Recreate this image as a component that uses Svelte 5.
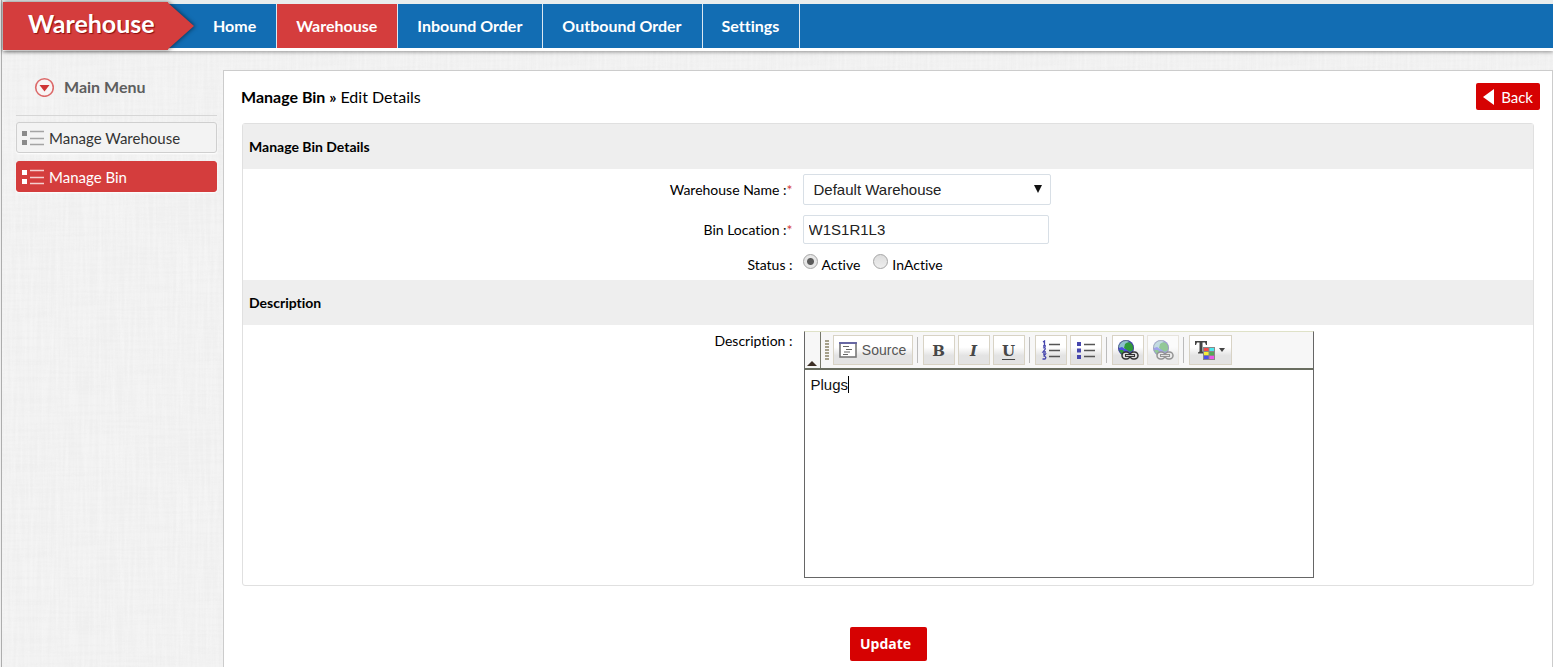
<script>
  const nav = ['Home', 'Warehouse', 'Inbound Order', 'Outbound Order', 'Settings'];
  const menu = ['Manage Warehouse', 'Manage Bin'];
  let activeNav = $state('Warehouse');
  let activeMenu = $state('Manage Bin');
  let warehouse = $state('Default Warehouse');
  let bin = $state('W1S1R1L3');
  let status = $state('Active');
  let description = $state('Plugs');
  let editing = $state(false);
</script>

{#snippet globe()}
  <circle cx="9" cy="8" r="8" fill="#4a4fe0" />
  <path d="M1 6Q4 0 10 0L12 2 9 4 10 6 8 9 5 7 2 8Z" fill="#8fc0cf" />
  <path d="M8 4Q11 1 14 3L16 6 16 10 13 12 10 10 7 8ZM2 10L6 10 8 13 5 15Z" fill="#2f9a3a" />
  <circle cx="9" cy="8" r="7.500" fill="none" stroke="#445" stroke-width="1" opacity=".6" />
  <rect x="5" y="12" width="8" height="7" rx="3.500" fill="#ddd" stroke="#333" stroke-width="1.500" />
  <rect x="13" y="12" width="8" height="7" rx="3.500" fill="#ddd" stroke="#333" stroke-width="1.500" />
  <path d="M8 15.500H18" stroke="#333" stroke-width="3" />
  <path d="M9 15.500H17" stroke="#ccc" stroke-width="1" />
{/snippet}

<div class="page">
  <header>
    <div class="brand">
      <svg viewBox="0 0 191 48" width="191" height="48" aria-hidden="true">
        <path d="M164 0L191 24 164 48Z" fill="#d43d3d" />
        <path d="M0 0H165V48H0Z" fill="#d43d3d" />
      </svg>
      <span>Warehouse</span>
    </div>
    <nav>
      {#each nav as item}
        <a href="#{item}" class:on={activeNav === item} onclick={() => (activeNav = item)}>{item}</a>
      {/each}
    </nav>
  </header>

  <div class="body">
    <aside>
      <h2>
        <svg width="20" height="20" viewBox="0 0 20 20" aria-hidden="true">
          <circle cx="10.500" cy="10.500" r="8.800" fill="#f8f4f4" stroke="#dc6a6a" stroke-width="1.600" />
          <path d="M5.500 8H15.500L10.500 14.500Z" fill="#cf3535" />
        </svg>
        Main Menu
      </h2>
      <ul>
        {#each menu as item}
          <li>
            <a href="#{item}" class:on={activeMenu === item} onclick={() => (activeMenu = item)}>
              <svg width="22" height="16" viewBox="0 0 22 16" aria-hidden="true">
                <path d="M0 1H5V6H0ZM0 10H5V15H0Z" fill="currentColor" />
                <path d="M8 1.500H22M8 8.500H22M8 14.500H22" stroke="currentColor" stroke-width="1.400" opacity=".75" />
              </svg>
              {item}
            </a>
          </li>
        {/each}
      </ul>
    </aside>

    <main>
      <div class="title">
        <h1>Manage Bin » <small>Edit Details</small></h1>
        <a class="back" href="#back">
          <svg width="11" height="16" viewBox="0 0 11 16" aria-hidden="true"><path d="M11 0V16L0 8Z" fill="#fff" /></svg>
          Back
        </a>
      </div>

      <form onsubmit={(e) => e.preventDefault()}>
        <div class="panel">
          <h3>Manage Bin Details</h3>
          <div class="row wh">
            <label for="wh">Warehouse Name :<i>*</i></label>
            <div class="select">
              <select id="wh" bind:value={warehouse}><option>Default Warehouse</option></select>
              <svg width="8" height="8" viewBox="0 0 8 8" aria-hidden="true"><path d="M0 0H8L4 8Z" fill="#111" /></svg>
            </div>
          </div>
          <div class="row loc">
            <label for="loc">Bin Location :<i>*</i></label>
            <input id="loc" type="text" bind:value={bin} />
          </div>
          <div class="row status">
            <span class="name" id="st">Status :</span>
            <div class="radios" role="radiogroup" aria-labelledby="st">
              <label><input type="radio" name="status" value="Active" bind:group={status} />Active</label>
              <label><input type="radio" name="status" value="InActive" bind:group={status} />InActive</label>
            </div>
          </div>
          <h3>Description</h3>
          <div class="row desc">
            <label for="desc">Description :</label>
            <div class="editor">
              <div class="toolbar">
                <button type="button" class="collapse" aria-label="Collapse toolbar">
                  <svg width="10" height="5" viewBox="0 0 10 5"><path d="M0 5L5 0 10 5Z" fill="#3d2f26" /></svg>
                </button>
                <span class="grip"></span>
                <button type="button" class="tool source">
                  <svg width="18" height="16" viewBox="0 0 18 16" aria-hidden="true">
                    <rect x="1" y="1" width="16" height="14" fill="#fff" stroke="#777" stroke-width="1.600" />
                    <path d="M0 1H18" stroke="#5d5da8" stroke-width="1.600" />
                    <path d="M4 4.500H10M7 7.500H13M5 10H11M4 12.500H9" stroke="#666" stroke-width="1.200" />
                  </svg>
                  Source
                </button>
                <span class="sep"></span>
                <button type="button" class="tool letter"><b>B</b></button>
                <button type="button" class="tool letter"><em>I</em></button>
                <button type="button" class="tool letter"><u>U</u></button>
                <span class="sep"></span>
                <button type="button" class="tool" aria-label="Numbered list">
                  <svg width="20" height="20" viewBox="0 0 20 20">
                    <path d="M8 4.500H19M8 10.500H19M8 16.500H19" stroke="#555" stroke-width="1.400" />
                    <path d="M2 2L3.500 1V6M2 6H5M2 8Q5 7 4 9.500L2 12H5M2 14H4.500L3 16Q6 17 4 19H1.500" fill="none" stroke="#4646ad" stroke-width="1.300" />
                  </svg>
                </button>
                <button type="button" class="tool" aria-label="Bulleted list">
                  <svg width="20" height="20" viewBox="0 0 20 20">
                    <path d="M8 4.500H19M8 10.500H19M8 16.500H19" stroke="#555" stroke-width="1.400" />
                    <path d="M1 2H5V6H1ZM1 8.500H5V12.500H1ZM1 15H5V19H1Z" fill="#4646ad" />
                  </svg>
                </button>
                <span class="sep"></span>
                <button type="button" class="tool" aria-label="Link">
                  <svg width="22" height="20" viewBox="0 0 22 20">{@render globe()}</svg>
                </button>
                <button type="button" class="tool" aria-label="Unlink" disabled>
                  <svg width="22" height="20" viewBox="0 0 22 20">{@render globe()}</svg>
                </button>
                <span class="sep"></span>
                <button type="button" class="tool color" aria-label="Text color">
                  <svg width="32" height="20" viewBox="0 0 32 20">
                    <path d="M1 1H13V5H12L11 2.500H8.500V11.500L10.500 12.500V13.500H4V12.500L5.500 11.500V2.500H3L2 5H1Z" fill="#444" />
                    <rect x="9" y="7" width="12" height="13" fill="#888" />
                    <path d="M10 8H14.500V11H10Z" fill="#f54848" />
                    <path d="M15.500 8H20V11H15.500Z" fill="#4de8ee" />
                    <path d="M10 12H14.500V15H10Z" fill="#f5ee38" />
                    <path d="M15.500 12H20V15H15.500Z" fill="#56a854" />
                    <path d="M10 16H14.500V19H10Z" fill="#4b4bf0" />
                    <path d="M15.500 16H20V19H15.500Z" fill="#ee55e8" />
                    <path d="M25 8H31L28 12Z" fill="#444" />
                  </svg>
                </button>
              </div>
              <div class="text">
                <textarea id="desc" bind:value={description} onfocus={() => (editing = true)}></textarea>
                {#if !editing}<span class="caret"></span>{/if}
              </div>
            </div>
          </div>
        </div>
        <button class="update">Update</button>
      </form>
    </main>
  </div>
</div>

<style>
  :global(body) { background: #efefef; }
  * { box-sizing: border-box; margin: 0; }
  a { text-decoration: none; }
  .page {
    min-height: 100vh;
    display: flex;
    flex-direction: column;
    margin-left: 1px;
    border-left: 1px solid #adadad;
    padding-left: 1px;
    font-family: Lato, "Open Sans", sans-serif;
    font-size: 14px;
    font-variant-ligatures: none;
    color: #000;
    background-color: #f1f1f1;
    background-image:
      url("data:image/svg+xml,%3Csvg xmlns='http://www.w3.org/2000/svg' width='240' height='240'%3E%3Cfilter id='h' x='0' y='0' width='1' height='1'%3E%3CfeTurbulence type='fractalNoise' baseFrequency='.015 .35' numOctaves='2' stitchTiles='stitch'/%3E%3CfeColorMatrix values='0 0 0 0 .5 0 0 0 0 .5 0 0 0 0 .5 .12 0 0 0 -.04'/%3E%3C/filter%3E%3Cfilter id='v' x='0' y='0' width='1' height='1'%3E%3CfeTurbulence type='fractalNoise' baseFrequency='.35 .015' numOctaves='2' stitchTiles='stitch'/%3E%3CfeColorMatrix values='0 0 0 0 1 0 0 0 0 1 0 0 0 0 1 .6 0 0 0 -.2'/%3E%3C/filter%3E%3Crect width='240' height='240' filter='url(%23h)'/%3E%3Crect width='240' height='240' filter='url(%23v)'/%3E%3C/svg%3E");
  }
  header {
    display: flex;
    align-items: center;
    height: 51px;
    padding-top: 2px;
    border-bottom: 1px solid #fff;
    box-shadow: 0 1px 4px #0006;
    background: linear-gradient(#e9eded 0 4px, #126db3 4px 48px, #fff 48px);
  }
  .brand {
    position: relative;
    flex: none;
    width: 191px;
    height: 48px;
    font-size: 25px;
    font-weight: 700;
    line-height: 42px;
    color: #fff;
    text-shadow: 1px 1px 1px #8a1010;
  }
  .brand svg { position: absolute; inset: 0; filter: drop-shadow(1px 0 2px #0008); }
  .brand span { position: relative; padding-left: 25px; }
  nav { display: flex; height: 44px; }
  nav a {
    padding: 0 20px 0 19px;
    border-right: 1px solid #dce8f2;
    font-size: 16px;
    font-weight: 700;
    line-height: 44px;
    color: #fff;
    white-space: nowrap;
  }
  nav a.on { background: #d43d3d; }
  .body { flex: 1; display: flex; align-items: stretch; padding-top: 19px; }
  aside { flex: none; width: 220px; padding: 0 6px 0 13px; }
  h2 {
    display: flex;
    align-items: center;
    gap: 10px;
    height: 46px;
    padding: 0 0 12px 18px;
    border-bottom: 1px solid #d6d6d6;
    font-size: 16px;
    color: #5e5e5e;
  }
  ul { list-style: none; padding: 6px 0 0; display: grid; gap: 8px; }
  li a {
    display: flex;
    align-items: center;
    gap: 5px;
    height: 31px;
    padding-left: 5px;
    border: 1px solid #cfcfcf;
    border-radius: 3px;
    background: #f3f3f3;
    font-size: 15px;
    color: #333;
    box-shadow: 0 1px 2px #fff;
  }
  li a svg { color: #8a8a8a; }
  li a.on { background: #d43d3d; border-color: #d43d3d; color: #fff; }
  li a.on svg { color: #fff; }
  main { flex: 1; min-width: 0; padding: 12px 18px 6px; border: 1px solid #ccc; border-bottom: 0; background: #fff; }
  .title { display: flex; justify-content: space-between; height: 40px; margin: 0 -6px 0 -1px; }
  h1 { font-size: 16px; line-height: 27px; font-weight: 700; }
  h1 small { font-size: 16px; font-weight: 400; }
  .back {
    display: flex;
    align-items: center;
    gap: 7px;
    height: 27px;
    padding: 0 7px;
    border-radius: 2px;
    background: #d60202;
    color: #fff;
    font-size: 15px;
  }
  .panel { border: 1px solid #e0e0e0; border-radius: 3px; }
  h3 { padding-left: 6px; line-height: 45px; font-size: 14px; background: #eee; }
  .row { display: grid; grid-template-columns: 42.6% 1fr; column-gap: 10px; align-items: center; }
  .row > label, .name { text-align: right; line-height: 20px; }
  i { font-style: normal; color: #d43d3d; }
  .wh { height: 41px; }
  .loc { height: 39px; }
  .status { height: 31px; }
  .select { position: relative; width: 248px; }
  .select svg { position: absolute; right: 9px; top: 11px; pointer-events: none; }
  select, .loc input {
    border: 1px solid #d8dfe6;
    border-radius: 2px;
    background: #fff;
    font: 15px "Liberation Sans", Arial, sans-serif;
    color: #222;
    display: block;
  }
  select { appearance: none; width: 100%; height: 31px; padding: 0 10px; }
  .loc input { width: 246px; height: 29px; padding: 0 5px; }
  .radios { display: flex; gap: 13px; }
  .radios label { display: flex; gap: 4px; line-height: 24px; }
  .radios input {
    appearance: none;
    width: 15px;
    height: 15px;
    margin-top: 1px;
    border: 1px solid #a5a5a5;
    border-radius: 50%;
    background: linear-gradient(#ddd, #eee);
  }
  .radios input:checked { background: radial-gradient(circle, #5b5b5b 0 3px, #e6e6e6 4px); }
  .desc { align-items: start; padding: 6px 0 7px; }
  .editor { max-width: 510px; margin-left: 1px; border: 1px solid #666; border-top-color: #dfe2c8; }
  .toolbar { display: flex; align-items: center; height: 38px; background: #f7f7f7; border-bottom: 2px solid #696d60; }
  button { cursor: pointer; }
  .collapse {
    display: flex;
    align-items: end;
    justify-content: center;
    width: 16px;
    height: 100%;
    padding: 0 0 2px;
    border: 0;
    border-right: 1px solid #77796b;
    background: none;
  }
  .grip { width: 4px; height: 20px; margin: 0 4px; background: repeating-linear-gradient(#a5a08a 0 2px, #f7f7f7 2px 3px); }
  .tool {
    display: flex;
    align-items: center;
    justify-content: center;
    flex: none;
    width: 32px;
    height: 30px;
    margin-right: 3px;
    padding: 0;
    border: 1px solid #d8d3c5;
    background: linear-gradient(#fff 40%, #e3e3e3 70%);
    color: #474747;
  }
  .tool:disabled { opacity: .5; }
  .source { width: 80px; gap: 5px; font: 14px "Liberation Sans", Arial, sans-serif; color: #555; }
  .color { width: 43px; }
  .letter { padding-top: 2px; font: 700 15px "DejaVu Serif", serif; }
  .letter u { text-decoration-thickness: 1px; text-underline-offset: 3px; }
  .sep { width: 1px; height: 26px; margin: 0 5px 0 1px; background: #bbb; }
  .text { position: relative; }
  textarea {
    display: block;
    width: 100%;
    height: 207px;
    padding: 5px 6px;
    border: 0;
    outline: 0;
    resize: none;
    font: 15px/20px "Liberation Sans", Arial, sans-serif;
    color: #111;
  }
  .caret { position: absolute; left: 43px; top: 6px; width: 1px; height: 17px; background: #000; }
  .update {
    display: block;
    margin: 41px auto 0;
    width: 77px;
    height: 34px;
    padding: 0 5px 2px 0;
    border: 0;
    border-radius: 2px;
    background: #d60202;
    color: #fff;
    font: 700 14px "Open Sans", sans-serif;
  }
</style>
